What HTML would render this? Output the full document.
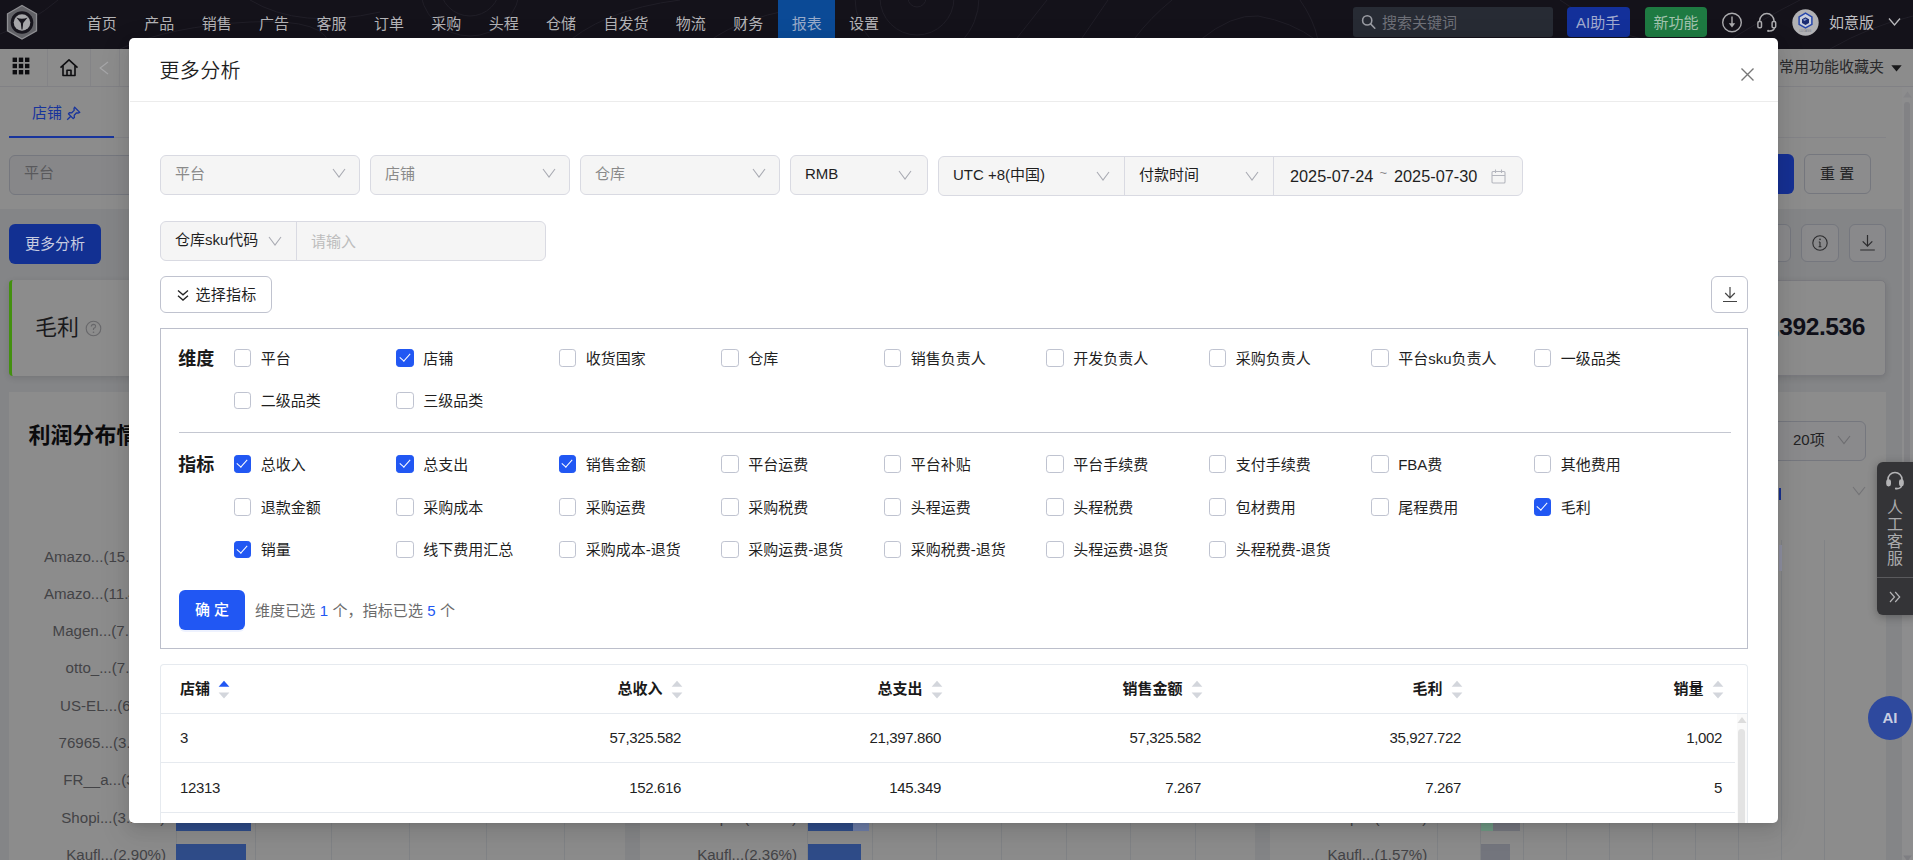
<!DOCTYPE html>
<html lang="zh-CN">
<head>
<meta charset="utf-8">
<title>更多分析</title>
<style>
*{box-sizing:border-box;margin:0;padding:0}
html,body{width:1913px;height:860px;overflow:hidden}
body{font-family:"Liberation Sans","Noto Sans CJK SC",sans-serif;font-size:14px;color:#1f1f1f;background:#848587;position:relative}
.abs{position:absolute}
svg{display:block}
/* ---------- top nav ---------- */
#nav{position:absolute;left:0;top:0;width:1913px;height:48.6px;background:#14121a;overflow:hidden}
#nav .item{position:absolute;top:0;height:48px;line-height:47px;font-size:15px;color:#c4c4c6;white-space:nowrap}
#nav .act{position:absolute;left:778px;top:0;width:57px;height:48px;background:#0b4a96}
/* ---------- dimmed background page ---------- */
#bg{position:absolute;left:0;top:0;width:1913px;height:860px;background:#848587;overflow:hidden}
#bg .w{position:absolute;background:#8c8c8c}
#bg .t{position:absolute;white-space:nowrap;color:#1b1b1d}
/* ---------- modal ---------- */
#modal{position:absolute;left:129.4px;top:38.4px;width:1649.1px;height:784.2px;background:#fff;border-radius:5px;box-shadow:0 6px 16px rgba(0,0,0,.09),0 3px 6px -4px rgba(0,0,0,.13),0 9px 28px 8px rgba(0,0,0,.055);overflow:hidden}
#modal .title{position:absolute;left:29.5px;top:17.7px;font-size:20px;line-height:30px;letter-spacing:0.35px;color:#1f1f1f;font-weight:350}
#modal .hline{position:absolute;left:0;top:63px;width:100%;height:1px;background:#ececec}

/* modal content */
.sel{position:absolute;height:40px;background:#f5f5f5;border:1px solid #d9dae2;border-radius:6px;font-size:15px;line-height:35px;padding-left:14px;color:#8a8a8a;white-space:nowrap}
.sel.v{color:#1f1f1f}
.sel .arr{position:absolute;right:12.8px;top:11.3px}
.sel.v .arr{right:14.5px;top:13px}
.grp{position:absolute;height:40px;background:#f5f5f5;border:1px solid #d9dae2;border-radius:6px}
.grp .c{position:absolute;top:-1px;height:40px;line-height:37px;font-size:15px;color:#1f1f1f;white-space:nowrap;padding-left:14px}
.grp .vl{position:absolute;top:-1px;width:1px;height:40px;background:#d9dae2}
.btn{position:absolute;background:#fff;border:1px solid #c0c3cf;border-radius:6px}
#panel{position:absolute;left:30px;top:290px;width:1588px;height:321px;border:1px solid #bcbfcb}
#panel .lab{position:absolute;left:17.3px;margin-top:1px;font-size:18px;font-weight:700;line-height:24px;color:#1a1a1a}
.cb{position:absolute;width:17.5px;height:17.5px;margin-top:-0.5px;border:1px solid #bfc3d0;border-radius:3.2px;background:#fff}
.cb.on{background:#2157f3;border-color:#2157f3}
.cb.on:after{content:"";position:absolute;left:4.4px;top:1.2px;width:5px;height:9px;border:solid #fff;border-width:0 1.7px 1.7px 0;transform:rotate(42deg)}
.cl{position:absolute;font-size:15px;line-height:20px;color:#1f1f1f;white-space:nowrap}

#tbl{position:absolute;left:30px;top:626px;width:1588px;height:160px;border:1px solid #e6eaef;border-bottom:none;border-radius:4px 4px 0 0}
#tbl .hl{position:absolute;left:0;height:1px;background:#e6eaef}
#tbl .th{position:absolute;top:13px;font-size:15px;font-weight:700;line-height:22px;color:#1a1a1a;white-space:nowrap}
#tbl .td{position:absolute;font-size:15px;letter-spacing:-0.36px;line-height:22px;color:#1f1f1f;white-space:nowrap}
#tbl .r{text-align:right}
.sort{position:absolute;top:14.5px;width:12px;height:19px;margin-left:-1px}

#bg .ln{position:absolute;background:#818386}
#bg .bx{position:absolute;border:1px solid #75777e;border-radius:6px;background:#89898b}
#bg .lb{position:absolute;font-size:15.1px;line-height:20px;color:#434346;white-space:nowrap}
</style>
</head>
<body>
<div id="bg">
<div class="w" style="left:0;top:49px;width:1913px;height:37px"></div>
<div class="ln" style="left:0;top:86px;width:1913px;height:1px;background:#818185"></div>
<div class="ln" style="left:47px;top:49px;width:1px;height:37px;background:#848487"></div>
<div class="ln" style="left:90px;top:49px;width:1px;height:37px;background:#848487"></div>
<div class="ln" style="left:119px;top:49px;width:1px;height:37px;background:#848487"></div>
<svg class="abs" style="left:12px;top:57px" width="18" height="18" viewBox="0 0 18 18" fill="#0d0d10"><rect x="0.6" y="0.6" width="4.4" height="4.4"/><rect x="6.8" y="0.6" width="4.4" height="4.4"/><rect x="13.0" y="0.6" width="4.4" height="4.4"/><rect x="0.6" y="6.8" width="4.4" height="4.4"/><rect x="6.8" y="6.8" width="4.4" height="4.4"/><rect x="13.0" y="6.8" width="4.4" height="4.4"/><rect x="0.6" y="13.0" width="4.4" height="4.4"/><rect x="6.8" y="13.0" width="4.4" height="4.4"/><rect x="13.0" y="13.0" width="4.4" height="4.4"/></svg>
<svg class="abs" style="left:59px;top:58px" width="20" height="19" viewBox="0 0 20 19" fill="none" stroke="#0d0d10" stroke-width="1.6" stroke-linejoin="round"><path d="M1.5 9.6 L10 1.8 L18.5 9.6"/><path d="M4 8 V17.5 H16 V8"/><path d="M8 17.5 V12.3 H12 V17.5"/></svg>
<svg class="abs" style="left:99px;top:61px" width="10" height="14" viewBox="0 0 10 14" fill="none" stroke="#a6a6a8" stroke-width="1.2"><path d="M9 1 L1.2 7 L9 13"/></svg>
<div class="t" style="left:1779px;top:57px;font-size:15px;line-height:20px;color:#28282a">常用功能收藏夹</div>
<svg class="abs" style="left:1891px;top:64.5px" width="11" height="7" viewBox="0 0 11 7"><path d="M0.3 0.3 H10.7 L5.5 6.6 Z" fill="#18181a"/></svg>
<div class="w" style="left:0;top:87px;width:1902px;height:122px"></div>
<div class="ln" style="left:9px;top:137px;width:1877px;height:1px;background:#838387"></div>
<div class="t" style="left:32px;top:103px;font-size:15px;line-height:20px;color:#18349c">店铺</div>
<svg class="abs" style="left:66px;top:106px" width="15" height="15" viewBox="0 0 15 15" fill="none" stroke="#18349c" stroke-width="1.3" stroke-linejoin="round"><path d="M8.6 1.2 L13.8 6.4 L12.4 7 L10.6 6.8 L8.2 9.2 L8.4 11.6 L7.2 12.6 L2.4 7.8 L3.4 6.6 L5.8 6.8 L8.2 4.4 L8 2.6 Z"/><path d="M4.8 10.2 L1.2 13.8"/></svg>
<div class="abs" style="left:9px;top:136px;width:105px;height:2px;background:#18349c"></div>
<div class="bx" style="left:9px;top:155px;width:200px;height:40px;background:#878789"></div>
<div class="t" style="left:24px;top:162.5px;font-size:15px;line-height:20px;color:#59595c">平台</div>
<div class="abs" style="left:1690px;top:154px;width:104px;height:40px;background:#163093;border-radius:6px"></div>
<div class="bx" style="left:1804px;top:154px;width:67px;height:40px;background:#8c8c8d"></div>
<div class="t" style="left:1820px;top:163.5px;font-size:15px;line-height:20px;color:#222224">重 置</div>
<div class="abs" style="left:1902px;top:87px;width:11px;height:773px;background:#8d8d8e"></div>
<svg class="abs" style="left:1903px;top:91px" width="9" height="7" viewBox="0 0 9 7"><path d="M4.5 0.5 L8.7 6.5 H0.3 Z" fill="#858588"/></svg>
<div class="abs" style="left:1904px;top:102px;width:6px;height:480px;background:#828285;border-radius:3px"></div>
<svg class="abs" style="left:1903px;top:855px" width="9" height="7" viewBox="0 0 9 7"><path d="M4.5 6.5 L8.7 0.5 H0.3 Z" fill="#7e7e82"/></svg>
<div class="abs" style="left:9px;top:224px;width:92px;height:40px;background:#123092;border-radius:6px"></div>
<div class="t" style="left:25px;top:233.5px;font-size:15px;line-height:20px;color:#c6cbe0">更多分析</div>
<div class="bx" style="left:1753px;top:224px;width:38px;height:38px"></div>
<div class="bx" style="left:1801px;top:224px;width:38px;height:38px"></div>
<svg class="abs" style="left:1811px;top:234px" width="18" height="18" viewBox="0 0 18 18" fill="none" stroke="#2c2c2e" stroke-width="1.1"><circle cx="9" cy="9" r="7.2"/><path d="M9 8 V12.6 M7.6 12.8 H10.4 M7.8 8 H9" /><circle cx="9" cy="5.4" r="0.8" fill="#2c2c2e" stroke="none"/></svg>
<div class="bx" style="left:1849px;top:224px;width:37px;height:38px"></div>
<svg class="abs" style="left:1859px;top:234px" width="17" height="18" viewBox="0 0 17 18" fill="none" stroke="#2c2c2e" stroke-width="1.2"><path d="M8.5 1 V12 M3.7 7.4 L8.5 12.2 L13.3 7.4 M1.2 16 H15.8"/></svg>
<div class="w" style="left:9px;top:279.6px;width:400px;height:96.6px;border-radius:4px;border-left:3px solid #43900f;box-shadow:0 2px 6px rgba(0,0,0,.12)"></div>
<div class="t" style="left:35px;top:313px;font-size:22px;line-height:30px;color:#1a1a1c">毛利</div>
<svg class="abs" style="left:85px;top:320px" width="17" height="17" viewBox="0 0 17 17" fill="none" stroke="#68686b" stroke-width="1.1"><circle cx="8.5" cy="8.5" r="7.3"/><path d="M6.3 6.6 Q6.4 4.4 8.5 4.4 Q10.7 4.5 10.6 6.4 Q10.5 7.6 8.5 8.6 V10"/><circle cx="8.5" cy="12.2" r="0.8" fill="#68686b" stroke="none"/></svg>
<div class="w" style="left:1500px;top:279.6px;width:386px;height:96.8px;border-radius:5px;border:1px solid #79797e;box-shadow:0 2px 6px rgba(0,0,0,.12)"></div>
<div class="t" style="right:48px;top:311px;font-size:24.6px;font-weight:700;letter-spacing:-0.45px;line-height:32px;color:#0f0f18">1,392.536</div>
<div class="w" style="left:9px;top:392px;width:616px;height:468px"></div>
<div class="w" style="left:640px;top:392px;width:615px;height:468px"></div>
<div class="w" style="left:1270px;top:392px;width:616px;height:468px"></div>
<div class="t" style="left:28.5px;top:421px;font-size:22px;font-weight:700;line-height:30px;color:#0b0b0d">利润分布情况</div>
<div class="bx" style="left:1766px;top:421px;width:100px;height:40px;background:#8a8a8c"></div>
<div class="t" style="left:1793px;top:430px;font-size:15px;line-height:20px;color:#222224">20项</div>
<svg class="abs" style="left:1837px;top:435px" width="14" height="10" viewBox="0 0 14 10" fill="none" stroke="#6d6d70" stroke-width="1.1"><path d="M1 1 L7 8.6 L13 1"/></svg>
<svg class="abs" style="left:1852px;top:486px" width="14" height="10" viewBox="0 0 14 10" fill="none" stroke="#737376" stroke-width="1.1"><path d="M1 1 L7 8.6 L13 1"/></svg>
<div class="abs" style="left:1778.6px;top:487.5px;width:2px;height:12.5px;background:#17308f"></div>
<div class="ln" style="left:176px;top:540px;width:1px;height:320px"></div>
<div class="ln" style="left:254.5px;top:540px;width:1px;height:320px"></div>
<div class="ln" style="left:331px;top:540px;width:1px;height:320px"></div>
<div class="ln" style="left:408.5px;top:540px;width:1px;height:320px"></div>
<div class="ln" style="left:485.5px;top:540px;width:1px;height:320px"></div>
<div class="ln" style="left:563.5px;top:540px;width:1px;height:320px"></div>
<div class="ln" style="left:807px;top:540px;width:1px;height:320px"></div>
<div class="ln" style="left:871.8px;top:540px;width:1px;height:320px"></div>
<div class="ln" style="left:936.4px;top:540px;width:1px;height:320px"></div>
<div class="ln" style="left:1000.6px;top:540px;width:1px;height:320px"></div>
<div class="ln" style="left:1065.5px;top:540px;width:1px;height:320px"></div>
<div class="ln" style="left:1129.8px;top:540px;width:1px;height:320px"></div>
<div class="ln" style="left:1194.7px;top:540px;width:1px;height:320px"></div>
<div class="ln" style="left:1437.1px;top:540px;width:1px;height:320px"></div>
<div class="ln" style="left:1480.1px;top:540px;width:1px;height:320px"></div>
<div class="ln" style="left:1523.0px;top:540px;width:1px;height:320px"></div>
<div class="ln" style="left:1566.0px;top:540px;width:1px;height:320px"></div>
<div class="ln" style="left:1608.9px;top:540px;width:1px;height:320px"></div>
<div class="ln" style="left:1651.9px;top:540px;width:1px;height:320px"></div>
<div class="ln" style="left:1694.9px;top:540px;width:1px;height:320px"></div>
<div class="ln" style="left:1737.8px;top:540px;width:1px;height:320px"></div>
<div class="ln" style="left:1780.8px;top:540px;width:1px;height:320px"></div>
<div class="ln" style="left:1823.7px;top:540px;width:1px;height:320px"></div>
<div class="abs" style="left:176px;top:803px;width:75px;height:28px;background:#2f4c89"></div>
<div class="abs" style="left:176px;top:844px;width:70px;height:28px;background:#2f4c89"></div>
<div class="abs" style="left:807.5px;top:803px;width:46px;height:28px;background:#2f4c89"></div>
<div class="abs" style="left:853px;top:803px;width:16px;height:28px;background:#6d7da8"></div>
<div class="abs" style="left:807.5px;top:844px;width:53px;height:28px;background:#2f4c89"></div>
<div class="abs" style="left:1480.5px;top:803px;width:12.5px;height:28px;background:#6f9984"></div>
<div class="abs" style="left:1493px;top:803px;width:26.5px;height:28px;background:#74767e"></div>
<div class="abs" style="left:1480.5px;top:844px;width:29px;height:28px;background:#74767e"></div>
<div class="abs" style="left:1779px;top:545px;width:3px;height:26px;background:#8d8fa0"></div>
<div class="lb" style="left:43.9px;top:546.5px">Amazo...(15.62%)</div>
<div class="lb" style="left:43.9px;top:583.8px">Amazo...(11.48%)</div>
<div class="lb" style="left:52.6px;top:621.1px">Magen...(7.93%)</div>
<div class="lb" style="left:65.6px;top:658.4px">otto_...(7.25%)</div>
<div class="lb" style="left:60.1px;top:695.7px">US-EL...(6.84%)</div>
<div class="lb" style="left:58.5px;top:733.0px">76965...(3.97%)</div>
<div class="lb" style="left:63.3px;top:770.3px">FR__a...(3.66%)</div>
<div class="lb" style="left:61.3px;top:807.6px">Shopi...(3.12%)</div>
<div class="lb" style="left:66.2px;top:844.9px">Kaufl...(2.90%)</div>
<div class="lb" style="right:1116.0px;top:546.5px">Amazo...(16.05%)</div>
<div class="lb" style="right:1116.0px;top:583.8px">Amazo...(12.31%)</div>
<div class="lb" style="right:1116.0px;top:621.1px">Magen...(8.14%)</div>
<div class="lb" style="right:1116.0px;top:658.4px">otto_...(7.02%)</div>
<div class="lb" style="right:1116.0px;top:695.7px">US-EL...(6.51%)</div>
<div class="lb" style="right:1116.0px;top:733.0px">76965...(4.20%)</div>
<div class="lb" style="right:1116.0px;top:770.3px">FR__a...(3.48%)</div>
<div class="lb" style="right:1116.0px;top:807.6px">Shopi...(3.06%)</div>
<div class="lb" style="right:1116.0px;top:844.9px">Kaufl...(2.36%)</div>
<div class="lb" style="right:485.7px;top:546.5px">Amazo...(14.88%)</div>
<div class="lb" style="right:485.7px;top:583.8px">Amazo...(10.92%)</div>
<div class="lb" style="right:485.7px;top:621.1px">Magen...(7.45%)</div>
<div class="lb" style="right:485.7px;top:658.4px">otto_...(7.11%)</div>
<div class="lb" style="right:485.7px;top:695.7px">US-EL...(6.03%)</div>
<div class="lb" style="right:485.7px;top:733.0px">76965...(3.35%)</div>
<div class="lb" style="right:485.7px;top:770.3px">FR__a...(2.94%)</div>
<div class="lb" style="right:485.7px;top:807.6px">Shopi...(2.21%)</div>
<div class="lb" style="right:485.7px;top:844.9px">Kaufl...(1.57%)</div>
<div class="abs" style="left:1877px;top:462px;width:40px;height:153px;background:#343437;border-radius:6px 0 0 6px;box-shadow:0 2px 10px rgba(0,0,0,.3)"></div>
<div class="abs" style="left:1877px;top:576.5px;width:36px;height:1px;background:#5a5a5d"></div>
<svg class="abs" style="left:1884px;top:470px" width="22" height="22" viewBox="0 0 22 22" fill="none" stroke="#b4b4b6" stroke-width="1.6"><path d="M4 11.5 V9.5 A7 7 0 0 1 18 9.5 V11.5"/><rect x="3" y="10" width="3.2" height="5.6" rx="1.5" fill="#b4b4b6"/><rect x="15.8" y="10" width="3.2" height="5.6" rx="1.5" fill="#b4b4b6"/><path d="M17.6 15.6 Q17 18.4 13 18.6" stroke-linecap="round"/><circle cx="12" cy="18.6" r="1.1" fill="#b4b4b6" stroke="none"/></svg>
<div class="t" style="left:1887px;top:498.8px;width:16px;font-size:16px;line-height:17.2px;color:#aaaaac;white-space:normal;word-break:break-all">人工客服</div>
<svg class="abs" style="left:1889px;top:591px" width="12" height="12" viewBox="0 0 12 12" fill="none" stroke="#b4b4b6" stroke-width="1.2"><path d="M1 1 L5.5 6 L1 11 M6.2 1 L10.7 6 L6.2 11"/></svg>
<div class="abs" style="left:1868px;top:696px;width:44px;height:44px;border-radius:22px;background:#2e499e;color:#c9cee2;font-weight:700;font-size:15px;line-height:44px;text-align:center">AI</div>
</div>
<div id="nav">
  <svg class="abs" style="left:0;top:0" width="1913" height="49" viewBox="0 0 1913 49" fill="none" stroke="#201e27" stroke-width="1"><path d="M0 34 Q32 22 58 0"/><path d="M120 49 Q170 26 250 22 T330 49"/><circle cx="470" cy="-14" r="30"/><circle cx="470" cy="-14" r="50"/><path d="M250 0 Q300 30 380 12"/><path d="M560 49 Q600 10 680 0"/><path d="M700 49 Q730 20 800 8"/><circle cx="917" cy="-2" r="9"/><circle cx="917" cy="-2" r="37"/><circle cx="917" cy="-2" r="62"/><path d="M1017 38 L1047 0"/><path d="M1082 38 L1108 0"/><path d="M1135 38 Q1150 18 1172 0"/><path d="M1200 40 Q1232 14 1258 16 Q1292 22 1316 40"/><path d="M1300 0 Q1314 20 1318 40"/><path d="M1560 0 Q1600 30 1660 44"/><path d="M1716 49 Q1760 20 1800 0"/><path d="M1830 49 Q1870 26 1913 16"/></svg>
  <div class="act"></div>
  <svg class="abs" style="left:5px;top:4px" width="34" height="38" viewBox="0 0 34 38"><polygon points="17,1.5 31.5,9.8 31.5,26.8 17,35 2.5,26.8 2.5,9.8" fill="#626267"/><polygon points="17,1.5 31.5,9.8 31.5,26.8 17,35 2.5,26.8 2.5,9.8" fill="none" stroke="#8e8e92" stroke-width="1.3"/><circle cx="17" cy="18.5" r="11.3" fill="#17151d"/><circle cx="17" cy="18.5" r="8.3" fill="#a6a6a9"/><path d="M11.4 13.4 Q17 16.2 22.6 13.4 L18.2 19 L17.5 25.6 L16.5 25.6 L15.8 19 Z" fill="#17151d"/></svg>
  <div class="item" style="left:86.8px;color:#b3b3b6">首页</div>
  <div class="item" style="left:144.3px;color:#b3b3b6">产品</div>
  <div class="item" style="left:201.8px;color:#b3b3b6">销售</div>
  <div class="item" style="left:259.1px;color:#b3b3b6">广告</div>
  <div class="item" style="left:316.6px;color:#b3b3b6">客服</div>
  <div class="item" style="left:374px;color:#b3b3b6">订单</div>
  <div class="item" style="left:431.3px;color:#b3b3b6">采购</div>
  <div class="item" style="left:488.8px;color:#b3b3b6">头程</div>
  <div class="item" style="left:546.1px;color:#b3b3b6">仓储</div>
  <div class="item" style="left:603.6px;color:#b3b3b6">自发货</div>
  <div class="item" style="left:675.8px;color:#b3b3b6">物流</div>
  <div class="item" style="left:733.3px;color:#b3b3b6">财务</div>
  <div class="item" style="left:791.8px;color:#98abc9">报表</div>
  <div class="item" style="left:849.1px;color:#b3b3b6">设置</div>
  <div class="abs" style="left:1353px;top:7px;width:200px;height:30px;background:#272b34;border-radius:3px"></div>
  <svg class="abs" style="left:1360px;top:13px" width="18" height="18" viewBox="0 0 18 18" fill="none" stroke="#9a9ca3" stroke-width="1.6"><circle cx="7.2" cy="7.4" r="4.6"/><path d="M10.6 10.9 L14.8 15.2" stroke-linecap="round"/></svg>
  <div class="item" style="left:1382px;color:#6e7078;top:-1px">搜索关键词</div>
  <div class="abs" style="left:1567px;top:7px;width:63px;height:30px;background:#13309a;border-radius:4px"></div>
  <div class="item" style="left:1576px;color:#a2abce;top:-1px">AI助手</div>
  <div class="abs" style="left:1645px;top:7px;width:62px;height:30px;background:#1e7a42;border-radius:4px"></div>
  <div class="item" style="left:1653.5px;color:#a3c3ae;top:-1px">新功能</div>
  <svg class="abs" style="left:1720px;top:11px" width="24" height="24" viewBox="0 0 24 24" fill="none" stroke="#ababae" stroke-width="1.4"><circle cx="12" cy="11.5" r="9.3"/><path d="M12 5.5 V14"/><path d="M8.8 12.2 H15.2 L12 16.4 Z" fill="#ababae" stroke="none"/></svg>
  <svg class="abs" style="left:1754px;top:10px" width="26" height="26" viewBox="0 0 26 26" fill="none" stroke="#ababae" stroke-width="1.5"><path d="M5.6 12 V10.8 A7.2 7.2 0 0 1 20 10.8 V12"/><rect x="3.9" y="11.6" width="3.6" height="6.2" rx="1.2"/><rect x="18.1" y="11.6" width="3.6" height="6.2" rx="1.2"/><path d="M20.4 17.8 Q20 20.6 15.4 20.9" stroke-linecap="round"/><circle cx="14.2" cy="20.9" r="1.1" fill="#ababae" stroke="none"/></svg>
  <svg class="abs" style="left:1792px;top:9px" width="27" height="27" viewBox="0 0 27 27"><circle cx="13.5" cy="13.5" r="13.2" fill="#b1b1b4"/><polygon points="13.5,4.2 19.9,7.9 19.9,15.3 13.5,19 7.1,15.3 7.1,7.9" fill="#c9cedd" stroke="#2747ad" stroke-width="1.5"/><path d="M13.5 8.2 L17 10.2 V14 L13.5 16 L10 14 V10.2 Z" fill="#1a2c72"/><path d="M11 10.8 L13.5 9.6 L15 10.4 L12.4 12 Z" fill="#7f93cf"/><text x="13.5" y="22.6" font-size="2.6" font-family="Liberation Sans, sans-serif" fill="#70747f" text-anchor="middle" letter-spacing="0.2">LUOANG</text></svg>
  <div class="item" style="left:1829px;color:#bdbdc0;top:-1px">如意版</div>
  <svg class="abs" style="left:1888px;top:17px" width="13" height="10" viewBox="0 0 13 10" fill="none" stroke="#b9b9bc" stroke-width="1.3"><path d="M1 1.5 L6.5 8 L12 1.5"/></svg>
</div>
<div id="modal"><div id="mc" style="position:absolute;left:0.6px;top:-0.4px;width:1648px;height:784.6px">
  <div class="title">更多分析</div>
  <div class="hline"></div>
  <svg class="abs" style="left:1610px;top:29px" width="15" height="15" viewBox="0 0 15 15" fill="none" stroke="#777" stroke-width="1.4"><path d="M1.5 1.5 L13.5 13.5 M13.5 1.5 L1.5 13.5"/></svg>
  <div class="sel" style="left:30px;top:117px;width:200px">平台<svg class="arr" width="14" height="12" viewBox="0 0 14 12" fill="none" stroke="#a9abb3" stroke-width="1.1"><path d="M1 2 L7 10 L13 2"/></svg></div>
  <div class="sel" style="left:240px;top:117px;width:200px">店铺<svg class="arr" width="14" height="12" viewBox="0 0 14 12" fill="none" stroke="#a9abb3" stroke-width="1.1"><path d="M1 2 L7 10 L13 2"/></svg></div>
  <div class="sel" style="left:450px;top:117px;width:200px">仓库<svg class="arr" width="14" height="12" viewBox="0 0 14 12" fill="none" stroke="#a9abb3" stroke-width="1.1"><path d="M1 2 L7 10 L13 2"/></svg></div>
  <div class="sel v" style="left:660px;top:117px;width:138px">RMB<svg class="arr" width="14" height="12" viewBox="0 0 14 12" fill="none" stroke="#a9abb3" stroke-width="1.1"><path d="M1 2 L7 10 L13 2"/></svg></div>
  <div class="grp" style="left:808px;top:118px;width:585px">
    <div class="c" style="left:0">UTC +8(中国)</div><svg class="abs" style="left:157px;top:12.5px" width="14" height="12" viewBox="0 0 14 12" fill="none" stroke="#a9abb3" stroke-width="1.1"><path d="M1 2 L7 10 L13 2"/></svg>
    <div class="vl" style="left:185px"></div>
    <div class="c" style="left:186px">付款时间</div><svg class="abs" style="left:306px;top:12.5px" width="14" height="12" viewBox="0 0 14 12" fill="none" stroke="#a9abb3" stroke-width="1.1"><path d="M1 2 L7 10 L13 2"/></svg>
    <div class="vl" style="left:334px"></div>
    <div class="c" style="left:337px;top:1px;font-size:16.3px">2025-07-24</div>
    <div class="c" style="left:426.5px;top:-3px;color:#8a8a8a;font-size:13px">~</div>
    <div class="c" style="left:441px;top:1px;font-size:16.3px">2025-07-30</div>
    <svg class="abs" style="left:552px;top:12px" width="15" height="15" viewBox="0 0 15 15" fill="none" stroke="#b4b6be" stroke-width="1.1"><rect x="1" y="2.5" width="13" height="11.5" rx="1"/><path d="M1 6.5 H14 M4.5 0.5 V4 M10.5 0.5 V4"/></svg>
  </div>
  <div class="grp" style="left:30px;top:183px;width:386px">
    <div class="c" style="left:0">仓库sku代码</div><svg class="abs" style="left:107px;top:12.5px" width="14" height="12" viewBox="0 0 14 12" fill="none" stroke="#a9abb3" stroke-width="1.1"><path d="M1 2 L7 10 L13 2"/></svg>
    <div class="vl" style="left:135px"></div>
    <div class="c" style="left:136px;top:1px;color:#bdbdbd">请输入</div>
  </div>
  <div class="btn" style="left:30px;top:238px;width:112px;height:37px"><svg class="abs" style="left:15.3px;top:11.5px" width="14" height="13" viewBox="0 0 14 13" fill="none" stroke="#222" stroke-width="1.3"><path d="M2 1.5 L7 5.8 L12 1.5 M2 6.8 L7 11.1 L12 6.8"/></svg><div class="abs" style="left:34.5px;top:0.5px;line-height:34px;font-size:15px;letter-spacing:0.25px;color:#1f1f1f;white-space:nowrap">选择指标</div></div>
  <div class="btn" style="left:1581px;top:238px;width:37px;height:37px"><svg class="abs" style="left:10px;top:9px" width="16" height="17" viewBox="0 0 16 17" fill="none" stroke="#444" stroke-width="1.2"><path d="M8 1 V11.5 M3.2 7 L8 11.8 L12.8 7 M1 15.5 H15"/></svg></div>
  <div id="panel">
    <div class="lab" style="top:17px">维度</div>
    <div class="cb" style="left:73.0px;top:20.5px"></div><div class="cl" style="left:99.7px;top:19.5px">平台</div>
    <div class="cb on" style="left:235.5px;top:20.5px"></div><div class="cl" style="left:262.2px;top:19.5px">店铺</div>
    <div class="cb" style="left:398.0px;top:20.5px"></div><div class="cl" style="left:424.7px;top:19.5px">收货国家</div>
    <div class="cb" style="left:560.5px;top:20.5px"></div><div class="cl" style="left:587.2px;top:19.5px">仓库</div>
    <div class="cb" style="left:723.0px;top:20.5px"></div><div class="cl" style="left:749.7px;top:19.5px">销售负责人</div>
    <div class="cb" style="left:885.5px;top:20.5px"></div><div class="cl" style="left:912.2px;top:19.5px">开发负责人</div>
    <div class="cb" style="left:1048.0px;top:20.5px"></div><div class="cl" style="left:1074.7px;top:19.5px">采购负责人</div>
    <div class="cb" style="left:1210.5px;top:20.5px"></div><div class="cl" style="left:1237.2px;top:19.5px">平台sku负责人</div>
    <div class="cb" style="left:1373.0px;top:20.5px"></div><div class="cl" style="left:1399.7px;top:19.5px">一级品类</div>
    <div class="cb" style="left:73.0px;top:63px"></div><div class="cl" style="left:99.7px;top:62px">二级品类</div>
    <div class="cb" style="left:235.5px;top:63px"></div><div class="cl" style="left:262.2px;top:62px">三级品类</div>
    <div class="abs" style="left:18px;top:103px;width:1552px;height:1px;background:#c4c7d1"></div>
    <div class="lab" style="top:123px">指标</div>
    <div class="cb on" style="left:73.0px;top:126.5px"></div><div class="cl" style="left:99.7px;top:125.5px">总收入</div>
    <div class="cb on" style="left:235.5px;top:126.5px"></div><div class="cl" style="left:262.2px;top:125.5px">总支出</div>
    <div class="cb on" style="left:398.0px;top:126.5px"></div><div class="cl" style="left:424.7px;top:125.5px">销售金额</div>
    <div class="cb" style="left:560.5px;top:126.5px"></div><div class="cl" style="left:587.2px;top:125.5px">平台运费</div>
    <div class="cb" style="left:723.0px;top:126.5px"></div><div class="cl" style="left:749.7px;top:125.5px">平台补贴</div>
    <div class="cb" style="left:885.5px;top:126.5px"></div><div class="cl" style="left:912.2px;top:125.5px">平台手续费</div>
    <div class="cb" style="left:1048.0px;top:126.5px"></div><div class="cl" style="left:1074.7px;top:125.5px">支付手续费</div>
    <div class="cb" style="left:1210.5px;top:126.5px"></div><div class="cl" style="left:1237.2px;top:125.5px">FBA费</div>
    <div class="cb" style="left:1373.0px;top:126.5px"></div><div class="cl" style="left:1399.7px;top:125.5px">其他费用</div>
    <div class="cb" style="left:73.0px;top:169.6px"></div><div class="cl" style="left:99.7px;top:168.6px">退款金额</div>
    <div class="cb" style="left:235.5px;top:169.6px"></div><div class="cl" style="left:262.2px;top:168.6px">采购成本</div>
    <div class="cb" style="left:398.0px;top:169.6px"></div><div class="cl" style="left:424.7px;top:168.6px">采购运费</div>
    <div class="cb" style="left:560.5px;top:169.6px"></div><div class="cl" style="left:587.2px;top:168.6px">采购税费</div>
    <div class="cb" style="left:723.0px;top:169.6px"></div><div class="cl" style="left:749.7px;top:168.6px">头程运费</div>
    <div class="cb" style="left:885.5px;top:169.6px"></div><div class="cl" style="left:912.2px;top:168.6px">头程税费</div>
    <div class="cb" style="left:1048.0px;top:169.6px"></div><div class="cl" style="left:1074.7px;top:168.6px">包材费用</div>
    <div class="cb" style="left:1210.5px;top:169.6px"></div><div class="cl" style="left:1237.2px;top:168.6px">尾程费用</div>
    <div class="cb on" style="left:1373.0px;top:169.6px"></div><div class="cl" style="left:1399.7px;top:168.6px">毛利</div>
    <div class="cb on" style="left:73.0px;top:212.1px"></div><div class="cl" style="left:99.7px;top:211.1px">销量</div>
    <div class="cb" style="left:235.5px;top:212.1px"></div><div class="cl" style="left:262.2px;top:211.1px">线下费用汇总</div>
    <div class="cb" style="left:398.0px;top:212.1px"></div><div class="cl" style="left:424.7px;top:211.1px">采购成本-退货</div>
    <div class="cb" style="left:560.5px;top:212.1px"></div><div class="cl" style="left:587.2px;top:211.1px">采购运费-退货</div>
    <div class="cb" style="left:723.0px;top:212.1px"></div><div class="cl" style="left:749.7px;top:211.1px">采购税费-退货</div>
    <div class="cb" style="left:885.5px;top:212.1px"></div><div class="cl" style="left:912.2px;top:211.1px">头程运费-退货</div>
    <div class="cb" style="left:1048.0px;top:212.1px"></div><div class="cl" style="left:1074.7px;top:211.1px">头程税费-退货</div>
    <div class="abs" style="left:18px;top:261px;width:66px;height:40px;background:#2157f3;border-radius:6px;color:#fff;font-size:15px;font-weight:500;line-height:40px;text-align:center;box-shadow:0 2px 0 rgba(33,87,243,.08)">确 定</div>
    <div class="abs" style="left:94px;top:272px;font-size:15px;letter-spacing:0.1px;line-height:20px;color:#6b6b6b;white-space:nowrap">维度已选 <span style="color:#2157f3">1</span> 个，指标已选 <span style="color:#2157f3">5</span> 个</div>
  </div>
  <div id="tbl">
    <div class="th" style="left:19px">店铺</div><svg class="sort" style="left:58px" viewBox="0 0 11 18"><path d="M5.5 0.6 L10.6 6.4 H0.4 Z" fill="#2157f3"/><path d="M5.5 17.6 L10.6 11.8 H0.4 Z" fill="#d3d6dc"/></svg>
    <div class="th r" style="right:1084.5px">总收入</div><svg class="sort" style="left:511px" viewBox="0 0 11 18"><path d="M5.5 0.6 L10.6 6.4 H0.4 Z" fill="#d3d6dc"/><path d="M5.5 17.6 L10.6 11.8 H0.4 Z" fill="#d3d6dc"/></svg>
    <div class="th r" style="right:824.5px">总支出</div><svg class="sort" style="left:771px" viewBox="0 0 11 18"><path d="M5.5 0.6 L10.6 6.4 H0.4 Z" fill="#d3d6dc"/><path d="M5.5 17.6 L10.6 11.8 H0.4 Z" fill="#d3d6dc"/></svg>
    <div class="th r" style="right:564.5px">销售金额</div><svg class="sort" style="left:1031px" viewBox="0 0 11 18"><path d="M5.5 0.6 L10.6 6.4 H0.4 Z" fill="#d3d6dc"/><path d="M5.5 17.6 L10.6 11.8 H0.4 Z" fill="#d3d6dc"/></svg>
    <div class="th r" style="right:304.5px">毛利</div><svg class="sort" style="left:1291px" viewBox="0 0 11 18"><path d="M5.5 0.6 L10.6 6.4 H0.4 Z" fill="#d3d6dc"/><path d="M5.5 17.6 L10.6 11.8 H0.4 Z" fill="#d3d6dc"/></svg>
    <div class="th r" style="right:43.5px">销量</div><svg class="sort" style="left:1552px" viewBox="0 0 11 18"><path d="M5.5 0.6 L10.6 6.4 H0.4 Z" fill="#d3d6dc"/><path d="M5.5 17.6 L10.6 11.8 H0.4 Z" fill="#d3d6dc"/></svg>
    <div class="hl" style="top:48px;width:1586px"></div>
    <div class="hl" style="top:97px;width:1574px"></div>
    <div class="hl" style="top:147px;width:1574px"></div>
    <div class="td" style="left:19px;top:62px">3</div>
    <div class="td r" style="right:1066px;top:62px">57,325.582</div>
    <div class="td r" style="right:806px;top:62px">21,397.860</div>
    <div class="td r" style="right:546px;top:62px">57,325.582</div>
    <div class="td r" style="right:286px;top:62px">35,927.722</div>
    <div class="td r" style="right:25px;top:62px">1,002</div>
    <div class="td" style="left:19px;top:112px">12313</div>
    <div class="td r" style="right:1066px;top:112px">152.616</div>
    <div class="td r" style="right:806px;top:112px">145.349</div>
    <div class="td r" style="right:546px;top:112px">7.267</div>
    <div class="td r" style="right:286px;top:112px">7.267</div>
    <div class="td r" style="right:25px;top:112px">5</div>
    <div class="abs" style="left:1576px;top:49px;width:10px;height:120px;background:#fafafa"></div>
    <svg class="abs" style="left:1576px;top:51px" width="10" height="8" viewBox="0 0 10 8"><path d="M5 1 L9.5 7 H0.5 Z" fill="#dcdcdc"/></svg>
    <div class="abs" style="left:1577.2px;top:64px;width:7px;height:110px;background:#e3e3e3;border-radius:4px"></div>
  </div>
</div></div>
</body>
</html>
